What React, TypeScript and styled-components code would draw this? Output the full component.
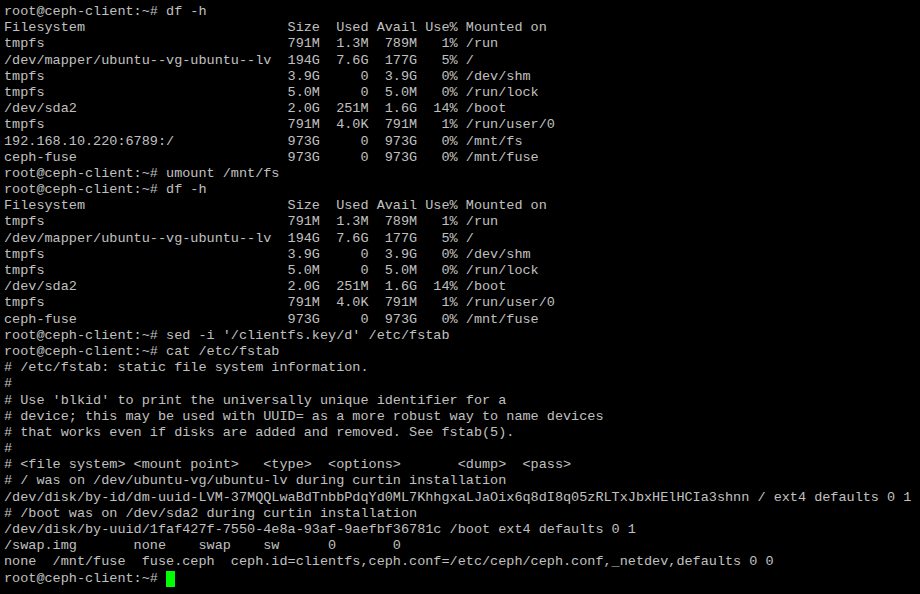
import React from "react";
import styled, { createGlobalStyle } from "styled-components";

const Global = createGlobalStyle`
  html, body {
    margin: 0;
    padding: 0;
    background: #000000;
  }
  #root {
    min-height: 594px;
    background: #000000;
  }
`;

const Terminal = styled.div`
  width: 920px;
  height: 594px;
  box-sizing: border-box;
  padding: 4px 0 0 4px;
  background: #000000;
  color: #c0c0c0;
  font-family: "Liberation Mono", "Courier New", monospace;
  font-size: 13.5px;
  overflow: hidden;
  display: flex;
  flex-direction: column;
`;

const Line = styled.div`
  height: 16.2px;
  line-height: 16.2px;
  white-space: pre;
`;

const Cursor = styled.span`
  display: inline-block;
  width: 9px;
  height: 16px;
  vertical-align: top;
  background: #00ff00;
`;

const P = "root@ceph-client:~# ";

const dfFull = [
  "Filesystem                         Size  Used Avail Use% Mounted on",
  "tmpfs                              791M  1.3M  789M   1% /run",
  "/dev/mapper/ubuntu--vg-ubuntu--lv  194G  7.6G  177G   5% /",
  "tmpfs                              3.9G     0  3.9G   0% /dev/shm",
  "tmpfs                              5.0M     0  5.0M   0% /run/lock",
  "/dev/sda2                          2.0G  251M  1.6G  14% /boot",
  "tmpfs                              791M  4.0K  791M   1% /run/user/0",
];

const lines: string[] = [
  P + "df -h",
  ...dfFull,
  "192.168.10.220:6789:/              973G     0  973G   0% /mnt/fs",
  "ceph-fuse                          973G     0  973G   0% /mnt/fuse",
  P + "umount /mnt/fs",
  P + "df -h",
  ...dfFull,
  "ceph-fuse                          973G     0  973G   0% /mnt/fuse",
  P + "sed -i '/clientfs.key/d' /etc/fstab",
  P + "cat /etc/fstab",
  "# /etc/fstab: static file system information.",
  "#",
  "# Use 'blkid' to print the universally unique identifier for a",
  "# device; this may be used with UUID= as a more robust way to name devices",
  "# that works even if disks are added and removed. See fstab(5).",
  "#",
  "# <file system> <mount point>   <type>  <options>       <dump>  <pass>",
  "# / was on /dev/ubuntu-vg/ubuntu-lv during curtin installation",
  "/dev/disk/by-id/dm-uuid-LVM-37MQQLwaBdTnbbPdqYd0ML7KhhgxaLJaOix6q8dI8q05zRLTxJbxHElHCIa3shnn / ext4 defaults 0 1",
  "# /boot was on /dev/sda2 during curtin installation",
  "/dev/disk/by-uuid/1faf427f-7550-4e8a-93af-9aefbf36781c /boot ext4 defaults 0 1",
  "/swap.img       none    swap    sw      0       0",
  "none  /mnt/fuse  fuse.ceph  ceph.id=clientfs,ceph.conf=/etc/ceph/ceph.conf,_netdev,defaults 0 0",
];

export default function App() {
  return (
    <>
      <Global />
      <Terminal>
        {lines.map((l, i) => (
          <Line key={i}>{l}</Line>
        ))}
        <Line>
          {P}
          <Cursor />
        </Line>
      </Terminal>
    </>
  );
}
